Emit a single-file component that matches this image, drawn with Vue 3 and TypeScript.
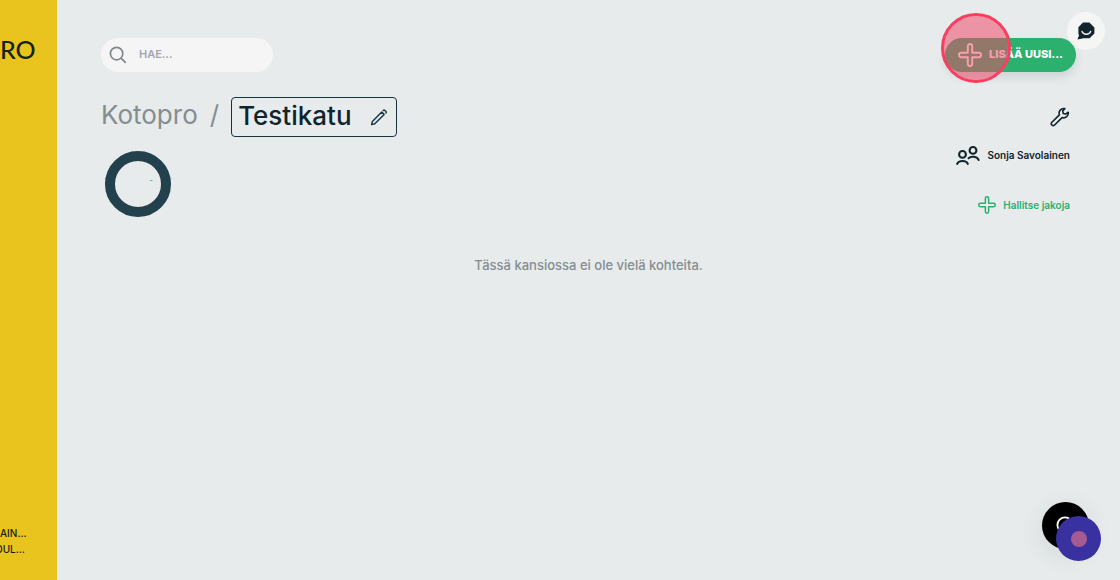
<script setup lang="ts">
import { ref } from 'vue'

const query = ref('')
const folder = ref('Testikatu')
const accountLines: string[] = ['AIN...', 'OUL...']
</script>

<template>
  <div class="app">
    <aside class="sidebar">
      <div class="brand">RO</div>
      <div class="account">
        <span v-for="line in accountLines" :key="line">{{ line }}</span>
      </div>
    </aside>

    <main class="main">
      <header class="topbar">
        <label class="search">
          <svg width="18" height="18" viewBox="0 0 18 18" fill="none" stroke="#7d888b" stroke-width="1.7" stroke-linecap="round" aria-hidden="true">
            <circle cx="7.6" cy="7.6" r="6.2" />
            <path d="M12.3 12.3L16.3 16.3" />
          </svg>
          <input v-model="query" type="text" placeholder="HAE..." aria-label="Hae" />
        </label>
        <button class="add" type="button">
          <svg width="24" height="24" viewBox="0 0 24 24" fill="none" stroke="#fff" stroke-width="1.9" stroke-linejoin="round" aria-hidden="true">
            <path d="M9.8 3.2a2.2 2.2 0 0 1 4.4 0V9.8H20.8a2.2 2.2 0 0 1 0 4.4H14.2V20.8a2.2 2.2 0 0 1-4.4 0V14.2H3.2a2.2 2.2 0 0 1 0-4.4H9.8Z" />
          </svg>
          <span>LISÄÄ UUSI...</span>
        </button>
      </header>

      <section class="head">
        <div class="left">
          <nav class="crumbs">
            <a href="#">Kotopro</a>
            <span class="slash">/</span>
            <div class="name">
              <input v-model="folder" type="text" aria-label="Kansion nimi" />
              <button class="icon" type="button" aria-label="Muokkaa">
                <svg width="18" height="18" viewBox="0 0 18 18" fill="none" stroke="#17343e" stroke-width="1.4" stroke-linejoin="round" stroke-linecap="round" aria-hidden="true">
                  <path d="M1.6 16.6L2.4 13.4L11.8 4L14.2 6.4L4.8 15.8Z" />
                  <path d="M13.2 2.4a1.2 1.2 0 0 1 1.7 0L15.9 3.4a1.2 1.2 0 0 1 0 1.7" />
                </svg>
              </button>
            </div>
          </nav>
          <div class="ring"><span>-</span></div>
        </div>
        <div class="tools">
          <button class="icon" type="button" aria-label="Asetukset">
            <svg width="20" height="20" viewBox="0 0 20 20" fill="none" stroke="#10242c" stroke-width="1.6" stroke-linejoin="round" stroke-linecap="round" aria-hidden="true">
              <path d="M14.8 1.6A4.7 4.7 0 0 0 9.4 7.9L1.9 15.3a1.9 1.9 0 0 0 2.7 2.7L12.1 10.6A4.7 4.7 0 0 0 18.2 5.2L15.7 7.1L13.2 6.4L12.7 3.9Z" />
            </svg>
          </button>
          <div class="owner">
            <svg width="24" height="20" viewBox="0 0 24 20" fill="none" stroke="#10242c" stroke-width="2.1" stroke-linecap="round" aria-hidden="true">
              <circle cx="6.5" cy="9.4" r="3.4" />
              <circle cx="17" cy="5.4" r="3.4" />
              <path d="M1.2 18.8C2.6 15 10.4 15 11.8 18.8" />
              <path d="M12.6 13.2C14.8 10.9 21.2 11.2 22.6 15" />
            </svg>
            <span>Sonja Savolainen</span>
          </div>
          <a class="share" href="#">
            <svg width="18" height="18" viewBox="0 0 24 24" fill="none" stroke="#2bb06d" stroke-width="2" stroke-linejoin="round" aria-hidden="true">
              <path d="M9.8 3.2a2.2 2.2 0 0 1 4.4 0V9.8H20.8a2.2 2.2 0 0 1 0 4.4H14.2V20.8a2.2 2.2 0 0 1-4.4 0V14.2H3.2a2.2 2.2 0 0 1 0-4.4H9.8Z" />
            </svg>
            <span>Hallitse jakoja</span>
          </a>
        </div>
      </section>

      <p class="empty">Tässä kansiossa ei ole vielä kohteita.</p>
    </main>

    <div class="click" aria-hidden="true"></div>
    <button class="feedback" type="button" aria-label="Palaute">
      <svg width="18" height="18" viewBox="0 0 18 18" aria-hidden="true">
        <path fill="#12252e" d="M6 .6H12.4L17.4 5.6V11.6L12.6 16.2H6.6L.4 17.6L2 13.4L1.4 11.4V5.2Z" />
        <path d="M5 9.4C6.2 13.2 12.4 13.2 13.6 9.4" fill="none" stroke="#f5f5f5" stroke-width="1.4" stroke-linecap="round" />
      </svg>
    </button>
    <button class="chat" type="button" aria-label="Chat">
      <svg width="20" height="20" viewBox="0 0 20 20" fill="none" stroke="#fff" stroke-width="1.8" aria-hidden="true">
        <circle cx="9" cy="9" r="7.6" />
      </svg>
    </button>
    <button class="record" type="button" aria-label="Tallenna"><span></span></button>
  </div>
</template>

<style>
body {
  background: #e7ebec;
}
</style>

<style scoped>
.app {
  position: relative;
  display: flex;
  min-height: 100vh;
  overflow: hidden;
  background: #e7ebec;
  color: #10242c;
  font-family: Inter, "Liberation Sans", sans-serif;
}

.app *,
.app {
  box-sizing: border-box;
}

button,
input {
  margin: 0;
  padding: 0;
  border: 0;
  background: none;
  color: inherit;
  font: inherit;
  outline: none;
}

button {
  cursor: pointer;
}

a {
  color: inherit;
  text-decoration: none;
}

svg {
  display: block;
  flex: none;
}

.sidebar {
  display: flex;
  flex: none;
  flex-direction: column;
  justify-content: space-between;
  width: 57px;
  padding: 35px 0 23px;
  background: #e9c31e;
  color: #14231a;
}

.brand {
  font-family: Lato, sans-serif;
  font-size: 25px;
  font-weight: 500;
  line-height: 28px;
}

.account {
  display: flex;
  flex-direction: column;
  align-items: flex-start;
  font-size: 10px;
  font-weight: 500;
  line-height: 16px;
}

.account span:last-child {
  margin-left: -5px;
}

.main {
  flex: 1;
  min-width: 0;
  padding: 38px 44px;
}

.topbar {
  display: flex;
  align-items: center;
  justify-content: space-between;
}

.search {
  display: flex;
  align-items: center;
  gap: 12px;
  width: 172px;
  height: 34px;
  padding: 0 8px;
  border-radius: 17px;
  background: #f5f5f5;
}

.search input {
  flex: 1;
  min-width: 0;
  height: 20px;
  padding-bottom: 2px;
  font-size: 11px;
  font-weight: 600;
}

.search input::placeholder {
  color: #a3a6b2;
  opacity: 1;
}

.add {
  display: flex;
  align-items: center;
  gap: 7px;
  height: 34px;
  padding: 0 13px;
  border-radius: 17px;
  background: #2bb06d;
  box-shadow: 0 5px 10px rgba(20, 50, 60, 0.12);
  color: #fff;
  font-size: 11px;
  font-weight: 800;
  white-space: nowrap;
}

.add span {
  padding-bottom: 2px;
}

.head {
  display: flex;
  justify-content: space-between;
  margin-top: 25px;
}

.crumbs {
  display: flex;
  align-items: center;
  color: #848d90;
  font-size: 26px;
  line-height: 36px;
}

.crumbs > a,
.slash {
  padding-bottom: 4px;
}

.slash {
  margin: 0 12px;
}

.name {
  display: flex;
  align-items: center;
  width: 166px;
  height: 40px;
  padding: 0 8px 0 6px;
  border: 1px solid #17343e;
  border-radius: 4px;
  color: #10242c;
  font-weight: 500;
}

.name input {
  flex: 1;
  min-width: 0;
  height: 38px;
  padding-bottom: 4px;
}

.ring {
  display: flex;
  align-items: center;
  justify-content: flex-end;
  width: 66px;
  height: 66px;
  margin: 14px 4px 0;
  padding: 0 8px 8px;
  border: 10px solid #23404d;
  border-radius: 50%;
  color: #2bb06d;
  font-size: 8px;
}

.tools {
  display: flex;
  flex-direction: column;
  align-items: flex-end;
  padding: 10px 6px 0 0;
  font-size: 10px;
  font-weight: 600;
  line-height: 20px;
}

.owner,
.share {
  display: flex;
  align-items: center;
  gap: 7px;
}

.owner {
  margin-top: 18px;
}

.share {
  margin-top: 30px;
  color: #2bb06d;
}

.empty {
  margin: 38px 0 0;
  color: #848d90;
  font-size: 13px;
  font-weight: 500;
  line-height: 20px;
  text-align: center;
}

.click,
.feedback,
.chat,
.record {
  position: absolute;
  display: flex;
  align-items: center;
  justify-content: center;
  border-radius: 50%;
}

.click {
  top: 13px;
  right: 109px;
  width: 70px;
  height: 70px;
  border: 3px solid #f93e60;
  background: rgba(241, 69, 100, 0.52);
  pointer-events: none;
}

.feedback {
  top: 12px;
  right: 15px;
  width: 38px;
  height: 38px;
  background: #f5f5f5;
}

.chat {
  right: 31px;
  bottom: 31px;
  width: 47px;
  height: 47px;
  background: #000;
  box-shadow: 0 6px 24px rgba(20, 50, 60, 0.1);
}

.record {
  right: 19px;
  bottom: 19px;
  width: 45px;
  height: 45px;
  background: #3931a0;
}

.record span {
  width: 16px;
  height: 16px;
  border-radius: 50%;
  background: #a55b91;
}
</style>
